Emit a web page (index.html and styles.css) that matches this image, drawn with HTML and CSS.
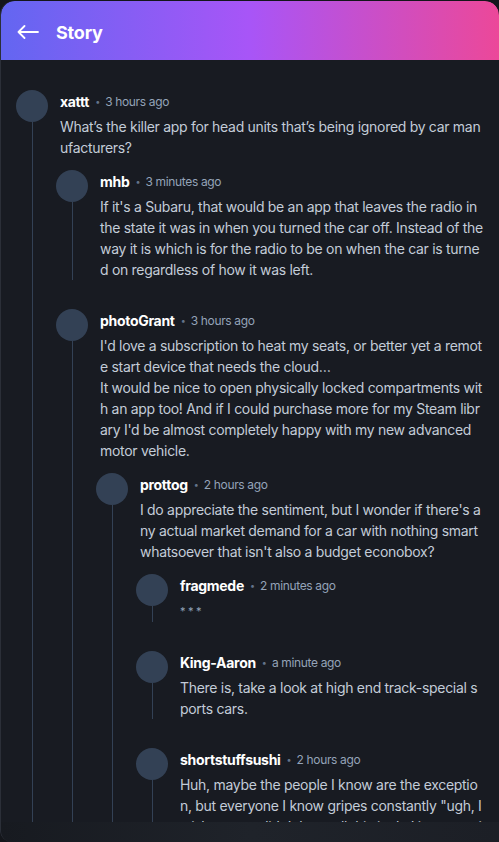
FILE: index.html
```html
<!DOCTYPE html>
<html>
<head>
<meta charset="utf-8">
<link rel="stylesheet" href="styles.css">
</head>
<body>
<div class="app">
  <header class="topbar">
    <svg class="back" width="22" height="14" viewBox="0 0 22 14" fill="none" stroke="#fff" stroke-width="1.8" stroke-linecap="round" stroke-linejoin="round"><path d="M21 7H1.5M7.5 1L1.5 7l6 6"/></svg>
    <span class="title">Story</span>
  </header>
  <main class="content">
    <div class="comment">
      <div class="rail"><div class="avatar"></div><div class="thread"></div></div>
      <div class="main">
        <div class="meta"><span class="name">xattt</span><span class="dot">•</span><span class="time">3 hours ago</span></div>
        <div class="text">What’s the killer app for head units that’s being ignored by car manufacturers?</div>
        <div class="children">
          <div class="comment">
            <div class="rail"><div class="avatar"></div><div class="thread"></div></div>
            <div class="main">
              <div class="meta"><span class="name">mhb</span><span class="dot">•</span><span class="time">3 minutes ago</span></div>
              <div class="text">If it's a Subaru, that would be an app that leaves the radio in the state it was in when you turned the car off. Instead of the way it is which is for the radio to be on when the car is turned on regardless of how it was left.</div>
            </div>
          </div>
          <div class="comment">
            <div class="rail"><div class="avatar"></div><div class="thread"></div></div>
            <div class="main">
              <div class="meta"><span class="name">photoGrant</span><span class="dot">•</span><span class="time">3 hours ago</span></div>
              <div class="text">I'd love a subscription to heat my seats, or better yet a remote start device that needs the cloud…<br>It would be nice to open physically locked compartments with an app too! And if I could purchase more for my Steam library I'd be almost completely happy with my new advanced motor vehicle.</div>
              <div class="children">
                <div class="comment">
                  <div class="rail"><div class="avatar"></div><div class="thread"></div></div>
                  <div class="main">
                    <div class="meta"><span class="name">prottog</span><span class="dot">•</span><span class="time">2 hours ago</span></div>
                    <div class="text">I do appreciate the sentiment, but I wonder if there's any actual market demand for a car with nothing smart whatsoever that isn't also a budget econobox?</div>
                    <div class="children">
                      <div class="comment">
                        <div class="rail"><div class="avatar"></div><div class="thread"></div></div>
                        <div class="main">
                          <div class="meta"><span class="name">fragmede</span><span class="dot">•</span><span class="time">2 minutes ago</span></div>
                          <div class="text stars">* * *</div>
                        </div>
                      </div>
                      <div class="comment">
                        <div class="rail"><div class="avatar"></div><div class="thread"></div></div>
                        <div class="main">
                          <div class="meta"><span class="name">King-Aaron</span><span class="dot">•</span><span class="time">a minute ago</span></div>
                          <div class="text">There is, take a look at high end track-special sports cars.</div>
                        </div>
                      </div>
                      <div class="comment">
                        <div class="rail"><div class="avatar"></div><div class="thread"></div></div>
                        <div class="main">
                          <div class="meta"><span class="name">shortstuffsushi</span><span class="dot">•</span><span class="time">2 hours ago</span></div>
                          <div class="text">Huh, maybe the people I know are the exception, but everyone I know gripes constantly "ugh, I wish my car didn't have all this junk, I just want it to drive" every time they get in.</div>
                        </div>
                      </div>
                    </div>
                  </div>
                </div>
              </div>
            </div>
          </div>
        </div>
      </div>
    </div>
  </main>
  <div class="footer"></div>
</div>
</body>
</html>
```

FILE: styles.css
```css
html, body {
  margin: 0;
  padding: 0;
  background: #14161b;
}
body {
  font-family: Inter, "Noto Sans", sans-serif;
  overflow: hidden;
}
.app {
  box-sizing: border-box;
  width: 499px;
  margin-top: 1px;
  height: 841px;
  display: flex;
  flex-direction: column;
  background: #181b22;
  border-left: 1px solid #2b2f38;
  border-radius: 14px 14px 0 12px;
  overflow: hidden;
}
.topbar {
  height: 59px;
  flex-shrink: 0;
  display: flex;
  align-items: center;
  gap: 17px;
  padding-left: 16px;
  background: linear-gradient(90deg, #6366f1 0%, #a855f7 50%, #ec4899 100%);
  border-radius: 14px 14px 0 0;
}
.back {
  display: block;
  margin-top: 2px;
}
.title {
  color: #fff;
  font-weight: 700;
  font-size: 18px;
  letter-spacing: -0.2px;
  margin-top: 3px;
}
.content {
  flex: 1;
  min-height: 0;
  overflow: hidden;
  padding: 30px 16px 0 15px;
}
.footer {
  height: 20px;
  flex-shrink: 0;
  background: linear-gradient(90deg, #171a20 0%, #1f232a 50%, #1c1f26 100%);
}
.comment {
  display: flex;
  gap: 12px;
}
.rail {
  width: 32px;
  flex-shrink: 0;
  display: flex;
  flex-direction: column;
}
.avatar {
  width: 32px;
  height: 32px;
  border-radius: 50%;
  background: #334155;
  flex-shrink: 0;
}
.thread {
  flex: 1;
  width: 1px;
  margin-left: 16px;
  background: #334155;
}
.main {
  flex: 1;
  min-width: 0;
}
.meta {
  height: 22px;
  display: flex;
  align-items: center;
  white-space: nowrap;
}
.name {
  color: #fff;
  font-weight: 700;
  font-size: 14px;
  letter-spacing: -0.3px;
}
.dot {
  color: #64748b;
  font-size: 9px;
  margin: 0 5px 0 6px;
}
.time {
  color: #94a3b8;
  font-size: 12px;
  letter-spacing: -0.35px;
}
.text {
  margin-top: 4px;
  color: #c3ccd8;
  font-size: 14px;
  line-height: 21px;
  letter-spacing: -0.3px;
  word-break: break-all;
}
.stars {
  color: #94a3b8;
  font-size: 11px;
  margin-top: 5px;
}
.children {
  margin-top: 12px;
  margin-left: -4px;
  display: flex;
  flex-direction: column;
  gap: 29px;
}
```
